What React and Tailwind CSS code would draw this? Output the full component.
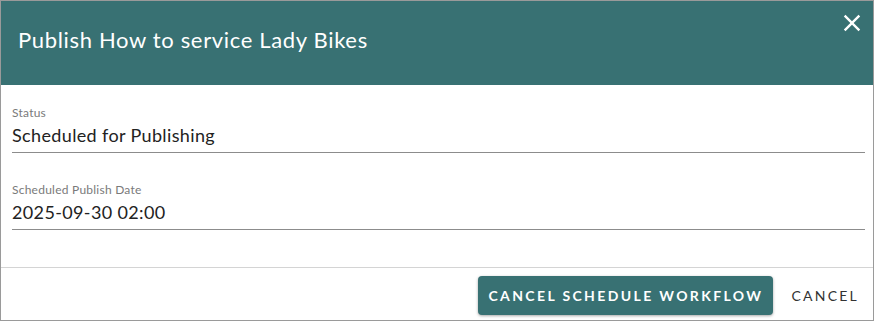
import React from 'react';

function CloseIcon() {
  return (
    <svg width="28" height="28" viewBox="0 0 24 24" fill="currentColor">
      <path d="M19 6.41L17.59 5 12 10.59 6.41 5 5 6.41 10.59 12 5 17.59 6.41 19 12 13.41 17.59 19 19 17.59 13.41 12z" />
    </svg>
  );
}

function Field({ label, value }) {
  return (
    <div className="border-b border-[#8c8c8c] pb-[5px]">
      <div className="text-[12px] leading-[16px] text-[#7a7a7a] tracking-[0.02em]">{label}</div>
      <div className="text-[18px] leading-[24px] text-[#222] mt-[2px] tracking-[0.02em]">{value}</div>
    </div>
  );
}

export default function App() {
  return (
    <div className="w-[874px] h-[321px] border border-[#9a9a9a] bg-white flex flex-col font-['Lato',sans-serif]">
      <div className="relative h-[84px] bg-[#387173] flex items-center px-[17px] pb-[8px] shrink-0">
        <h1 className="text-[22px] text-white tracking-[0.03em]">Publish How to service Lady Bikes</h1>
        <button className="absolute right-[7px] top-[8px] text-white">
          <CloseIcon />
        </button>
      </div>

      <div className="flex-1 pl-[11px] pr-[8px] pt-[20px] flex flex-col gap-[29px]">
        <Field label="Status" value="Scheduled for Publishing" />
        <Field label="Scheduled Publish Date" value="2025-09-30 02:00" />
      </div>

      <div className="h-[53px] border-t border-[#d4d4d4] flex items-start justify-end pt-[8px] pr-[14px] gap-[18px] shrink-0">
        <button className="h-[39px] px-[10px] rounded-[4px] bg-[#387173] text-white text-[14px] font-bold tracking-[0.17em] shadow-[0_1px_3px_rgba(0,0,0,0.35)]">
          CANCEL SCHEDULE WORKFLOW
        </button>
        <button className="h-[39px] text-[14px] text-[#333] tracking-[0.16em]">
          CANCEL
        </button>
      </div>
    </div>
  );
}
